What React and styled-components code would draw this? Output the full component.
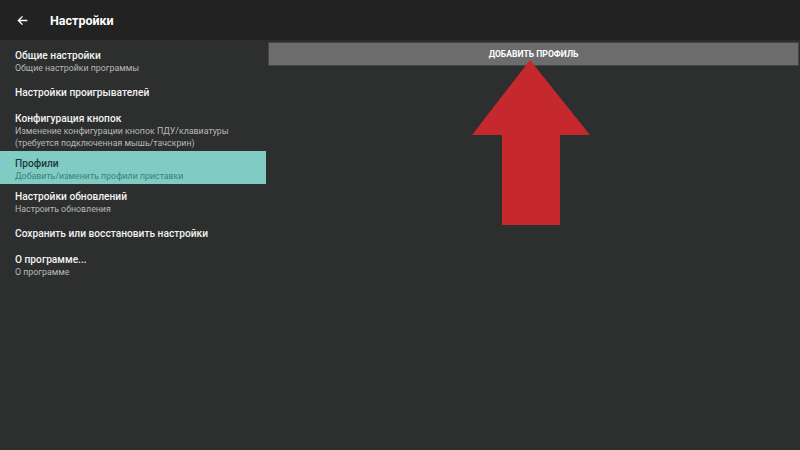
import React from 'react';
import styled, { createGlobalStyle } from 'styled-components';

const GlobalStyle = createGlobalStyle`
  html, body {
    margin: 0;
    padding: 0;
    background: #2d2e2e;
    font-family: Roboto, "Noto Sans", "DejaVu Sans", sans-serif;
  }
`;

const Screen = styled.div`
  position: relative;
  width: 800px;
  height: 450px;
  overflow: hidden;
  background: #2d2e2e;
  display: flex;
  flex-direction: column;
`;

const Toolbar = styled.div`
  height: 40px;
  flex-shrink: 0;
  background: #222222;
  display: flex;
  align-items: center;
  padding-left: 17px;
  gap: 22px;
  color: #ffffff;
`;

const BackIcon = styled.svg`
  width: 11px;
  height: 11px;
  fill: none;
  stroke: #ffffff;
  stroke-width: 2;
`;

const Title = styled.span`
  font-size: 12.5px;
  font-weight: 700;
`;

const Body = styled.div`
  flex: 1;
  display: flex;
`;

const List = styled.div`
  width: 266px;
  padding-top: 3px;
  display: flex;
  flex-direction: column;
`;

const Item = styled.div`
  min-height: ${p => (p.$single ? '30px' : '28px')};
  box-sizing: border-box;
  padding: ${p => (p.$single ? '6px 15px 4px' : '6px 15px 2px')};
  display: flex;
  flex-direction: column;
  justify-content: center;
  background: ${p => (p.$active ? '#80cbc4' : 'transparent')};
`;

const ItemTitle = styled.div`
  font-size: 10.2px;
  line-height: 13px;
  font-weight: 500;
  color: ${p => (p.$active ? '#1e3a38' : '#f2f2f2')};
`;

const ItemSub = styled.div`
  font-size: 8.8px;
  line-height: 12px;
  color: ${p => (p.$active ? '#3f807a' : '#b8b8b8')};
`;

const Content = styled.div`
  flex: 1;
  padding: 2px 1px 0 2px;
`;

const AddButton = styled.button`
  width: 100%;
  height: 24px;
  margin: 0;
  border: 1px solid #454545;
  background: #6c6c6c;
  color: #ffffff;
  font-family: inherit;
  font-size: 8.6px;
  font-weight: 700;
  display: flex;
  align-items: center;
  justify-content: center;
`;

const Pointer = styled.svg`
  position: absolute;
  left: 470px;
  top: 58px;
  width: 122px;
  height: 170px;
`;

const items = [
  { title: 'Общие настройки', sub: ['Общие настройки программы'] },
  { title: 'Настройки проигрывателей', sub: [] },
  {
    title: 'Конфигурация кнопок',
    sub: ['Изменение конфигурации кнопок ПДУ/клавиатуры', '(требуется подключенная мышь/тачскрин)'],
  },
  { title: 'Профили', sub: ['Добавить/изменить профили приставки'], active: true },
  { title: 'Настройки обновлений', sub: ['Настроить обновления'] },
  { title: 'Сохранить или восстановить настройки', sub: [] },
  { title: 'О программе...', sub: ['О программе'] },
];

const App = () => (
  <Screen>
    <GlobalStyle />
    <Toolbar>
      <BackIcon viewBox="0 0 16 16">
        <path d="M15 8H2M8 2L2 8l6 6" />
      </BackIcon>
      <Title>Настройки</Title>
    </Toolbar>
    <Body>
      <List>
        {items.map(it => (
          <Item key={it.title} $active={it.active} $single={it.sub.length === 0}>
            <ItemTitle $active={it.active}>{it.title}</ItemTitle>
            {it.sub.map(s => (
              <ItemSub key={s} $active={it.active}>{s}</ItemSub>
            ))}
          </Item>
        ))}
      </List>
      <Content>
        <AddButton>ДОБАВИТЬ ПРОФИЛЬ</AddButton>
      </Content>
    </Body>
    <Pointer viewBox="0 0 122 170">
      <polygon
        points="60,2 2,77 32,77 32,167 90,167 90,77 120,77"
        fill="#c5282d"
      />
    </Pointer>
  </Screen>
);

export default App;
